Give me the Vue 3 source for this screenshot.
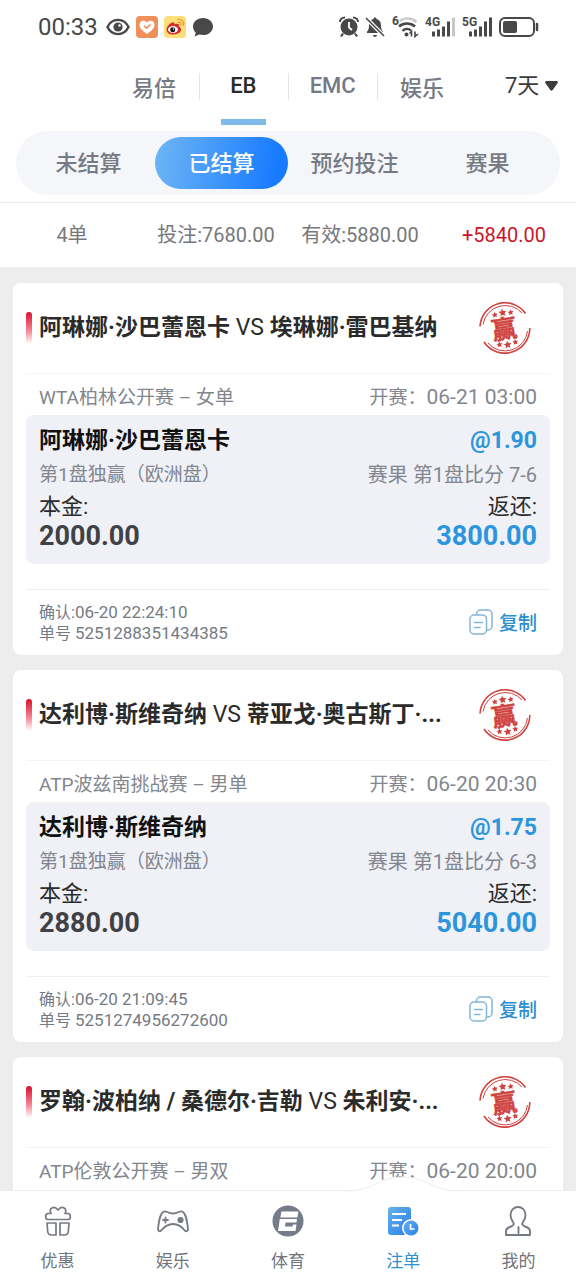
<script setup>
import { ref } from "vue"

const channels = ["易倍", "EB", "EMC", "娱乐"]
const activeChannel = ref("EB")

const filters = ["未结算", "已结算", "预约投注", "赛果"]
const activeFilter = ref("已结算")

const period = ref("7天")

const bets = [
	{
		home: "阿琳娜·沙巴蕾恩卡",
		away: "埃琳娜·雷巴基纳",
		league: "WTA柏林公开赛 – 女单",
		start: "06-21 03:00",
		pick: "阿琳娜·沙巴蕾恩卡",
		odds: "1.90",
		score: "7-6",
		stake: "2000.00",
		payout: "3800.00",
		confirmed: "06-20 22:24:10",
		orderNo: "5251288351434385"
	},
	{
		home: "达利博·斯维奇纳",
		away: "蒂亚戈·奥古斯丁·...",
		league: "ATP波兹南挑战赛 – 男单",
		start: "06-20 20:30",
		pick: "达利博·斯维奇纳",
		odds: "1.75",
		score: "6-3",
		stake: "2880.00",
		payout: "5040.00",
		confirmed: "06-20 21:09:45",
		orderNo: "5251274956272600"
	},
	{
		home: "罗翰·波柏纳 / 桑德尔·吉勒",
		away: "朱利安·...",
		league: "ATP伦敦公开赛 – 男双",
		start: "06-20 20:00"
	}
]

const copy = (orderNo) => {
	navigator.clipboard?.writeText(orderNo)
}
</script>

<template>
	<div class="app">
		<div class="status">
			<div class="status-side">
				<span class="clock">00:33</span>
				<svg width="24" height="18" viewBox="0 0 24 18">
					<path d="M1.500 9C6-.5 18-.5 22.500 9 18 18.500 6 18.500 1.500 9z" fill="none" stroke="#484848" stroke-width="2.400" />
					<circle cx="12" cy="9" r="4.600" fill="#484848" />
					<circle cx="13.500" cy="7.500" r="1.200" fill="#fff" />
				</svg>
				<svg width="22" height="22" viewBox="0 0 22 22">
					<rect width="22" height="22" rx="4" fill="#ee8f5c" />
					<path d="M11 18C6 14.500 3.500 12 3.500 8.700 3.500 4.500 8.500 3.500 11 6.500c2.500-3 7.500-2 7.500 2.200 0 3.300-2.500 5.800-7.500 9.300z" fill="#fff" />
					<path d="M8 9.800l2.500 2.400L14.500 8.500" fill="none" stroke="#ee8f5c" stroke-width="1.600" />
				</svg>
				<svg width="22" height="22" viewBox="0 0 22 22">
					<rect width="22" height="22" rx="4" fill="#fbdf78" />
					<path d="M2.500 13.500c0-3.500 5.500-8.500 7.500-7 .8.700.3 2 .3 2s4.500-2 4.700.8c0 .8-.4 1.200-.4 1.200 5 1.700 2.400 8-5.600 8-3.700 0-6.500-2-6.500-5z" fill="#d62b2b" />
					<ellipse cx="9" cy="13.600" rx="4.900" ry="3.500" fill="#fff" />
					<circle cx="8.700" cy="13.800" r="2.500" fill="#181818" />
					<circle cx="9.500" cy="13" r=".7" fill="#fff" />
					<path d="M14.500 6.300c2-.3 3 1 2.600 2.700M14 3.500c3.800-.7 6.200 2 5.500 5.700" fill="none" stroke="#ef9d3a" stroke-width="1.400" stroke-linecap="round" />
				</svg>
				<svg width="22" height="22" viewBox="0 0 22 22">
					<path d="M11 2C5.300 2 1 5.800 1 10.500c0 2.600 1.100 4.600 2.800 6.200L2.500 20.500l4.800-1.900c1.100.3 2.400.5 3.700.5 5.700 0 10-3.800 10-8.600S16.700 2 11 2z" fill="#484848" />
				</svg>
			</div>
			<div class="status-side">
				<svg width="20" height="22" viewBox="0 0 20 22">
					<path d="M1 6C1 3.500 3 1.500 6 1.500M19 6c0-2.500-2-4.500-5-4.500" fill="none" stroke="#484848" stroke-width="2" />
					<circle cx="10" cy="11" r="8.500" fill="#484848" />
					<path d="M4 17.500L2 20.500M16 17.500l2 3" stroke="#484848" stroke-width="2.200" />
					<path d="M10 6v5.500l3 2.500" fill="none" stroke="#fff" stroke-width="1.800" />
				</svg>
				<svg width="20" height="22" viewBox="0 0 20 22">
					<path d="M10 1.500c1 0 1.500.6 1.500 1.500 3.500.8 4.500 3.500 4.500 7 0 3 1 4.500 2 5.500v1.500H2V15.500c1-1 2-2.500 2-5.500 0-3.500 1-6.200 4.500-7 0-.9.500-1.500 1.500-1.500zM8 19h4c0 2.500-4 2.500-4 0z" fill="#484848" />
					<path d="M1 2l18 18" stroke="#fff" stroke-width="4" />
					<path d="M1 2l18 18" stroke="#484848" stroke-width="1.600" />
				</svg>
				<svg width="28" height="30" viewBox="0 -4 28 30">
					<text x="1" y="9" class="glyph">6</text>
					<path d="M8.500 5c5-3.800 12-3.500 17 1" fill="none" stroke="#c8c8c8" stroke-width="2.400" />
					<path d="M8 10.500c4.500-4 11.500-4 16 0" fill="none" stroke="#484848" stroke-width="2.600" />
					<path d="M11.500 14.800c2.500-2.300 6-2.300 8.500-.3" fill="none" stroke="#484848" stroke-width="2.400" />
					<circle cx="15.500" cy="18.500" r="2" fill="#484848" />
					<path d="M20.500 20.500v-5l-2 2M24 15.500v5l3-2.500" fill="none" stroke="#484848" stroke-width="1.600" />
				</svg>
				<svg width="31" height="30" viewBox="0 -4 31 30">
					<text x="0" y="10" class="glyph">4G</text>
					<path d="M8.500 20.500v-5M13.500 20.500v-7M18.500 20.500v-10M23.500 20.500v-15" stroke="#484848" stroke-width="3" />
					<path d="M28.500 20.500v-19" stroke="#c8c8c8" stroke-width="3" />
				</svg>
				<svg width="31" height="30" viewBox="0 -4 31 30">
					<text x="0" y="10" class="glyph">5G</text>
					<path d="M8.500 20.500v-5M13.500 20.500v-7M18.500 20.500v-10M23.500 20.500v-15M28.500 20.500v-19" stroke="#484848" stroke-width="3" />
				</svg>
				<svg width="40" height="20" viewBox="0 0 40 20">
					<rect x="1" y="1" width="34" height="18" rx="5" fill="none" stroke="#484848" stroke-width="2" />
					<rect x="4" y="4" width="14" height="12" rx="2" fill="#484848" />
					<path d="M38 7v6" stroke="#484848" stroke-width="2.500" stroke-linecap="round" />
				</svg>
			</div>
		</div>

		<header class="channels">
			<div class="channel-tabs">
				<button
					v-for="name in channels"
					:key="name"
					type="button"
					class="channel"
					:class="{ active: activeChannel === name }"
					@click="activeChannel = name"
				>
					{{ name }}
				</button>
			</div>
			<div class="period">
				<select v-model="period" aria-label="时间">
					<option>7天</option>
				</select>
				<svg width="13" height="10" viewBox="0 0 13 10">
					<path d="M1.500 0h10c1.300 0 1.700 1.300 1 2.200L7.700 9c-.6.900-1.800.9-2.400 0L.5 2.200C-.2 1.300.2 0 1.500 0z" fill="#3c3c3c" />
				</svg>
			</div>
		</header>

		<div class="filters">
			<button
				v-for="name in filters"
				:key="name"
				type="button"
				class="filter"
				:class="{ active: activeFilter === name }"
				@click="activeFilter = name"
			>
				{{ name }}
			</button>
		</div>

		<div class="summary">
			<span>4单</span>
			<span>投注:7680.00</span>
			<span>有效:5880.00</span>
			<span class="profit">+5840.00</span>
		</div>

		<main class="list">
			<article v-for="bet in bets" :key="bet.home" class="card">
				<div class="card-head">
					<i class="mark"></i>
					<h2 class="title"><b>{{ bet.home }}</b> VS <b>{{ bet.away }}</b></h2>
					<svg class="stamp" width="52" height="52" viewBox="0 0 52 52">
						<g fill="none" stroke="#cf4340">
							<path d="M1 24.500A25 25 0 0 1 46.500 11.500" stroke-width="1.600" />
							<path d="M4 22.500A22.500 22.500 0 0 1 43 11" stroke-width="1" />
							<path d="M50.800 26A25 25 0 0 1 5 40" stroke-width="1.600" />
							<path d="M48.500 29A22.500 22.500 0 0 1 9 41" stroke-width="1" />
						</g>
						<g transform="rotate(-9 26 26)">
							<text x="25" y="36" class="stamp-text">赢</text>
							<g fill="#cf4340">
								<path d="M26 6.500l1.200 2.400 2.700.4-2 1.900.5 2.700-2.400-1.300-2.400 1.300.5-2.700-2-1.900 2.700-.4z" />
								<path d="M18 8.500l.9 1.800 2 .3-1.400 1.400.3 2-1.800-.9-1.800.9.300-2-1.400-1.400 2-.3z" />
								<path d="M34 8.500l.9 1.800 2 .3-1.400 1.400.3 2-1.800-.9-1.800.9.300-2-1.400-1.400 2-.3z" />
								<path d="M26 39l1.200 2.400 2.700.4-2 1.900.5 2.700-2.400-1.300-2.400 1.300.5-2.700-2-1.900 2.700-.4z" />
								<path d="M18 38.500l.9 1.800 2 .3-1.400 1.400.3 2-1.800-.9-1.800.9.300-2-1.400-1.400 2-.3z" />
								<path d="M34 38.500l.9 1.800 2 .3-1.400 1.400.3 2-1.800-.9-1.800.9.300-2-1.400-1.400 2-.3z" />
							</g>
						</g>
					</svg>
				</div>

				<div class="match">
					<span>{{ bet.league }}</span>
					<span>开赛：<span class="date">{{ bet.start }}</span></span>
				</div>

				<template v-if="bet.pick">
					<div class="detail">
						<div class="row pick">
							<b>{{ bet.pick }}</b>
							<b class="blue">@{{ bet.odds }}</b>
						</div>
						<div class="row market">
							<span>第1盘独赢（欧洲盘）</span>
							<span class="result">赛果 第1盘比分 {{ bet.score }}</span>
						</div>
						<div class="row caption">
							<span>本金:</span>
							<span>返还:</span>
						</div>
						<div class="row money">
							<b>{{ bet.stake }}</b>
							<b class="blue">{{ bet.payout }}</b>
						</div>
					</div>

					<div class="card-foot">
						<div class="order">
							<div>确认:<span class="digits">{{ bet.confirmed }}</span></div>
							<div>单号 <span class="digits">{{ bet.orderNo }}</span></div>
						</div>
						<button type="button" class="copy" @click="copy(bet.orderNo)">
							<svg width="24" height="26" viewBox="0 0 24 26" fill="none" stroke="#83b6d6" stroke-width="1.500" stroke-linecap="round">
								<path d="M7.500 5.500V5a4 4 0 0 1 4-4H19a4 4 0 0 1 4 4v12a4 4 0 0 1-4 4h-1" />
								<rect x="1" y="6" width="16.500" height="19" rx="4" />
								<path d="M5.500 13.500h8M5.500 18.500h5.500" />
							</svg>
							复制
						</button>
					</div>
				</template>
			</article>
		</main>

		<nav class="nav">
			<svg class="hump" width="112" height="16" viewBox="0 0 112 16">
				<path d="M0 15C26 15 32 1 56 1s30 14 56 14v1H0z" fill="#fff" />
				<path d="M0 15C26 15 32 1 56 1s30 14 56 14" fill="none" stroke="#ececec" />
			</svg>
			<a href="#promo">
				<svg width="32" height="32" viewBox="0 0 32 32" fill="none" stroke="#757a84" stroke-width="1.700" stroke-linejoin="round" stroke-linecap="round">
					<path d="M6 14.500c-2.500 0-3.500-4.500-.5-6H9C6 3.500 12 0 16 5 20 0 26 3.500 23 8.500h3.500c3 1.500 2 6-.5 6z" />
					<path d="M5 18h9v12H9.500C7 30 6 29 5.700 26.500zM18 18h9l-.7 8.500C26 29 25 30 22.500 30H18z" />
				</svg>
				优惠
			</a>
			<a href="#games">
				<svg width="32" height="32" viewBox="0 0 32 32" fill="none" stroke="#757a84" stroke-width="1.800" stroke-linejoin="round" stroke-linecap="round">
					<path d="M7 6.500C9 5.500 11 8.500 16 8.500s7-3 9-2c4 1.500 5 9 6 17 .2 2.500-1.500 3.500-3.200 2C25 22 20 19 16 19s-9 3-11.800 6.500c-1.700 1.500-3.400.5-3.200-2C2 15.500 3 8 7 6.500z" />
					<path d="M6 15h5M8.500 12.500v5" />
					<circle cx="23.500" cy="15" r="2.200" fill="#757a84" />
				</svg>
				娱乐
			</a>
			<a href="#sports">
				<svg width="32" height="32" viewBox="0 0 32 32">
					<circle cx="16" cy="16" r="15.500" fill="#757b88" />
					<path d="M9.500 6.500H26.500L25.300 12.500H8.300z" fill="#fff" />
					<path d="M7.800 14H25l-.5 3.500H13.500L13 21.500h7.500l.5-2h3.500L23.500 26H6z" fill="#fff" />
				</svg>
				体育
			</a>
			<a href="#bets" class="active">
				<svg width="32" height="32" viewBox="0 0 32 32">
					<defs>
						<linearGradient id="bill" x1="0" y1="0" x2="1" y2="1">
							<stop offset="0" stop-color="#63b2ee" />
							<stop offset="1" stop-color="#2d7ee6" />
						</linearGradient>
					</defs>
					<path d="M4 2h17a3 3 0 0 1 3 3v25H4a3 3 0 0 1-3-3V5a3 3 0 0 1 3-3z" fill="url(#bill)" />
					<path d="M5 9h14M5 15h10M5 20.500h7" stroke="#fff" stroke-width="2" />
					<circle cx="24" cy="23" r="9" fill="#fff" />
					<circle cx="24" cy="23" r="7.500" fill="url(#bill)" />
					<path d="M23.500 19v5h4" fill="none" stroke="#fff" stroke-width="1.700" />
				</svg>
				注单
			</a>
			<a href="#mine">
				<svg width="32" height="32" viewBox="0 0 32 32" fill="none" stroke="#757a84" stroke-width="1.900" stroke-linejoin="round" stroke-linecap="round">
					<path d="M4 30v-4c0-2.500 2-3.500 5-4.500 2.500-1 3.500-2.500 2-4.500-1.500-2-2.500-4-2.500-7 0-5 3.500-8 7.500-8s7.500 3 7.500 8c0 3-1 5-2.500 7s-.5 3.500 2 4.500c3 1 5 2 5 4.500v4z" />
					<path d="M16.500 22v6" />
				</svg>
				我的
			</a>
		</nav>
	</div>
</template>

<style>
body {
	background: #ededed;
}
</style>

<style scoped>
.app {
	display: flex;
	flex-direction: column;
	height: 100vh;
	background: #fff;
	color: #757a84;
	font-family: Roboto, "Noto Sans CJK SC", sans-serif;
}

button,
select {
	padding: 0;
	border: 0;
	background: none;
	color: inherit;
	font: inherit;
	cursor: pointer;
}

svg {
	display: block;
	flex: none;
}

.status {
	display: flex;
	justify-content: space-between;
	align-items: center;
	flex: none;
	height: 54px;
	padding: 0 37px 0 38px;
}

.status-side {
	display: flex;
	align-items: center;
	gap: 6px;
}

.clock {
	color: #484848;
	font-size: 24px;
	line-height: 28px;
	margin-right: 2px;
}

.glyph {
	fill: #484848;
	font-size: 12px;
	font-weight: 700;
}

.channels {
	display: grid;
	grid-template-columns: 19fr 62fr 19fr;
	flex: none;
	height: 71px;
}

.channel-tabs {
	grid-column: 2;
	display: flex;
}

.channel {
	position: relative;
	flex: 1;
	padding-bottom: 8px;
	font-size: 22px;
	font-weight: 500;
}

.channel + .channel::before {
	content: "";
	position: absolute;
	left: 0;
	top: 19px;
	height: 27px;
	border-left: 1px solid #e4e4e8;
}

.channel.active {
	color: #2b2b2b;
}

.channel.active::after {
	content: "";
	position: absolute;
	left: 25%;
	right: 25%;
	bottom: 0;
	height: 6px;
	background: #7ebbe8;
}

.period {
	display: flex;
	align-items: center;
	justify-content: flex-end;
	gap: 5px;
	padding: 0 18px 8px 0;
	color: #3c3c3c;
	font-size: 22px;
}

.period select {
	appearance: none;
}

.filters {
	display: flex;
	flex: none;
	margin: 6px 16px 7px;
	padding: 6px;
	border-radius: 32px;
	background: #f4f6f9;
}

.filter {
	flex: 1;
	height: 52px;
	padding-bottom: 4px;
	border-radius: 26px;
	font-size: 22px;
	font-weight: 500;
}

.filter.active {
	background: linear-gradient(100deg, #6fb6f5, #177bff 90%);
	color: #fff;
}

.summary {
	display: flex;
	flex: none;
	border-top: 1px solid #e9e9eb;
	color: #77787c;
	font-size: 20px;
	line-height: 64px;
	text-align: center;
}

.summary span {
	flex: 1 1 0;
}

.summary .profit {
	color: #cb1628;
}

.list {
	display: flex;
	flex-direction: column;
	flex: 1;
	gap: 15px;
	min-height: 0;
	padding: 16px 13px 0;
	overflow-y: auto;
	scrollbar-width: none;
	background: #ededed;
}

.card {
	flex: none;
	padding: 0 13px;
	border-radius: 8px;
	background: #fff;
}

.card:last-child {
	padding-bottom: 16px;
}

.card-head {
	display: flex;
	align-items: center;
	height: 90px;
	border-bottom: 1px solid #f3f3f4;
}

.mark {
	width: 6px;
	height: 32px;
	border-radius: 3px;
	background: linear-gradient(#d8102c, #f58a98 60%, #fff);
}

.title {
	flex: 1;
	margin: 0 7px;
	overflow: hidden;
	color: #2b2b2b;
	font-size: 23px;
	font-weight: 400;
	line-height: 32px;
	white-space: nowrap;
}

.stamp {
	margin-right: 19px;
}

.stamp-text {
	fill: #cf4340;
	stroke: #cf4340;
	stroke-width: 0.5px;
	font-family: "Noto Sans CJK SC", sans-serif;
	font-size: 25px;
	font-weight: 700;
	text-anchor: middle;
}

.match {
	display: flex;
	justify-content: space-between;
	padding: 6px 13px 0;
	color: #82868e;
	font-size: 19px;
	line-height: 35px;
}

.date {
	font-size: 21px;
}

.detail {
	padding: 10px 13px 13px;
	border-radius: 8px;
	background: #f0f1f7;
}

.row {
	display: flex;
	justify-content: space-between;
}

.pick {
	color: #111;
	font-size: 23px;
	line-height: 32px;
}

.market {
	color: #82868e;
	font-size: 19px;
	line-height: 36px;
}

.result {
	font-size: 20px;
}

.caption {
	color: #2b2b2b;
	font-size: 22px;
	line-height: 28px;
}

.money {
	color: #404145;
	font-size: 27px;
	line-height: 30px;
}

.row .blue {
	color: #2c96dd;
}

.card-foot {
	display: flex;
	justify-content: space-between;
	align-items: center;
	height: 65px;
	margin-top: 25px;
	padding: 0 13px;
	border-top: 1px solid #f0f0f2;
}

.order {
	font-size: 16px;
	line-height: 20px;
}

.digits {
	font-size: 17px;
}

.copy {
	display: flex;
	align-items: center;
	gap: 6px;
	padding-bottom: 2px;
	color: #2c8fd0;
	font-size: 19px;
	font-weight: 500;
}

.nav {
	position: relative;
	display: flex;
	flex: none;
	height: 89px;
	border-top: 1px solid #ececec;
	background: #fff;
}

.hump {
	position: absolute;
	left: 70%;
	bottom: 100%;
	margin: 0 0 -1px -56px;
}

.nav a {
	display: flex;
	flex: 1;
	flex-direction: column;
	align-items: center;
	gap: 12px;
	padding-top: 14px;
	color: #6f747d;
	font-size: 17px;
	line-height: 25px;
	text-decoration: none;
}

.nav a.active {
	color: #2c8fd0;
}
</style>
